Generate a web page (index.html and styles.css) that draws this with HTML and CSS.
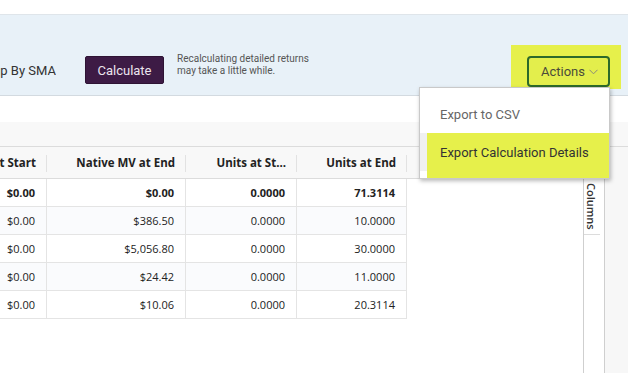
FILE: index.html
```html
<!DOCTYPE html>
<html lang="en">
<head>
<meta charset="utf-8">
<title>Detailed Returns</title>
<link rel="stylesheet" href="styles.css">
</head>
<body>
<div class="top-gap"></div>
<section class="panel">
  <div class="label-box"><span class="label">Group By SMA</span></div>
  <button class="btn-calc">Calculate</button>
  <p class="note">Recalculating detailed returns<br>may take a little while.</p>
  <div class="spacer"></div>
  <div class="actions-wrap">
    <button class="btn-actions">Actions <svg class="chev" width="9" height="6" viewBox="0 0 9 6"><polyline points="0.5,0.8 4.5,4.8 8.5,0.8" fill="none" stroke="#8a8a7a" stroke-width="1"/></svg></button>
    <div class="menu">
      <div class="menu-item">Export to CSV</div>
      <div class="menu-item active"><span>Export Calculation Details</span></div>
    </div>
  </div>
</section>
<div class="gap"></div>
<section class="grid">
  <div class="band"></div>
  <div class="grid-body">
    <div class="main">
      <div class="table">
        <div class="row head">
          <div class="cell"><span>Native MV at Start</span></div>
          <div class="cell"><span>Native MV at End</span></div>
          <div class="cell"><span>Units at St...</span></div>
          <div class="cell"><span>Units at End</span></div>
        </div>
        <div class="row total">
          <div class="cell"><span>$0.00</span></div>
          <div class="cell"><span>$0.00</span></div>
          <div class="cell"><span>0.0000</span></div>
          <div class="cell"><span>71.3114</span></div>
        </div>
        <div class="row alt">
          <div class="cell"><span>$0.00</span></div>
          <div class="cell"><span>$386.50</span></div>
          <div class="cell"><span>0.0000</span></div>
          <div class="cell"><span>10.0000</span></div>
        </div>
        <div class="row">
          <div class="cell"><span>$0.00</span></div>
          <div class="cell"><span>$5,056.80</span></div>
          <div class="cell"><span>0.0000</span></div>
          <div class="cell"><span>30.0000</span></div>
        </div>
        <div class="row alt">
          <div class="cell"><span>$0.00</span></div>
          <div class="cell"><span>$24.42</span></div>
          <div class="cell"><span>0.0000</span></div>
          <div class="cell"><span>11.0000</span></div>
        </div>
        <div class="row">
          <div class="cell"><span>$0.00</span></div>
          <div class="cell"><span>$10.06</span></div>
          <div class="cell"><span>0.0000</span></div>
          <div class="cell"><span>20.3114</span></div>
        </div>
      </div>
    </div>
    <aside class="side">
      <div class="side-tabs">
        <div class="tab">Columns</div>
      </div>
      <div class="side-panel"></div>
    </aside>
  </div>
</section>
</body>
</html>
```
FILE: styles.css
```css
* { box-sizing: border-box; }
html, body { margin: 0; padding: 0; background: #fff; overflow: hidden; }
body { width: 628px; height: 373px; font-family: Roboto, "Liberation Sans", sans-serif; color: #333; }

.top-gap { height: 14px; }

.panel {
  height: 82px;
  background: #e8f1f8;
  border-top: 1px solid #dfe5ea;
  border-bottom: 1px solid #d3dae0;
  display: flex;
  align-items: center;
  padding-top: 30px;
  position: relative;
  z-index: 2;
}
.label-box { width: 56px; display: flex; justify-content: flex-end; overflow: hidden; flex: none; }
.label { font-size: 13px; color: #333; white-space: nowrap; }
.btn-calc {
  margin-left: 29px;
  width: 79px; height: 28px;
  background: #3d1b45;
  color: #ece4ee;
  border: 1px solid #2e1334;
  border-radius: 2px;
  font-family: Roboto, sans-serif;
  font-size: 13px;
  padding: 0;
}
.note {
  margin: 0 0 0 13px;
  font-size: 10px;
  line-height: 12px;
  color: #555;
  align-self: center;
  margin-top: -10px;
}
.spacer { flex: 1; }
.actions-wrap {
  position: relative;
  background: #e6f04b;
  padding: 11px 11px 2px 16px;
  margin-right: 7px;
  margin-top: -6px;
}
.btn-actions {
  display: flex; align-items: center; justify-content: center; gap: 4px;
  width: 83px; height: 31px;
  background: #e3ee4c;
  border: 2px solid #2d6a2a;
  border-radius: 4px;
  font-family: Roboto, sans-serif;
  font-size: 13px;
  color: #4a4a3a;
  padding: 0 0 0 2px;
}
.chev { margin-top: 1px; }
.menu {
  position: absolute;
  top: 42px;
  right: 11px;
  width: 191px;
  background: #fff;
  border: 1px solid #c9c9c9;
  box-shadow: 1px 2px 4px rgba(0,0,0,0.28);
  padding: 7px 0 7px;
}
.menu-item {
  height: 38px;
  display: flex; align-items: center;
  padding-left: 20px;
  font-size: 13px;
  color: #666;
  position: relative;
}
.menu-item.active { background: #f0f0f0; color: #333; }
.menu-item.active::before {
  content: "";
  position: absolute;
  left: 7px; right: 0; top: 0; bottom: -7px;
  background: #e6f04b;
}
.menu-item.active span { position: relative; }

.gap { height: 26px; }

.grid { font-family: "Open Sans", "Noto Sans", sans-serif; font-size: 11px; color: #222; }
.band { height: 25px; background: #f8f8f8; border-bottom: 1px solid #dcdcdc; }
.grid-body { display: flex; height: 226px; }
.main { flex: none; width: 583px; }
.table { width: 407px; }
.row { display: grid; grid-template-columns: 47px 139px 111px 110px; height: 28px; border-bottom: 1px solid #e4e4e4; background: #fff; }
.row.alt { background: #fafbfd; }
.row.head { height: 32px; background: #f8f8f8; border-bottom: 1px solid #dcdcdc; width: 583px; grid-template-columns: 47px 139px 111px 110px 1fr; }
.cell { display: flex; align-items: center; justify-content: flex-end; padding-right: 11px; border-right: 1px solid #e4e4e4; overflow: hidden; white-space: nowrap; }
.head .cell { border-right: none; position: relative; font-weight: 700; font-size: 11.5px; }
.head .cell::after { content: ""; position: absolute; right: 0; top: 8px; bottom: 6px; width: 1px; background: #e2e2e2; }
.total .cell { font-weight: 700; }

.side { flex: none; width: 45px; display: flex; border-left: 1px solid #cfcfcf; }
.side-tabs { width: 21px; border-right: 1px solid #cfcfcf; background: #fff; padding-top: 31px; }
.tab {
  writing-mode: vertical-rl;
  height: 57px;
  border-top: 1px solid #dcdcdc;
  border-bottom: 1px solid #dcdcdc;
  display: flex; align-items: center; justify-content: center;
  font-size: 11px; font-weight: 600; color: #333;
  padding-right: 1px;
}
.side-panel { flex: 1; background: #f7f7f7; }
```
